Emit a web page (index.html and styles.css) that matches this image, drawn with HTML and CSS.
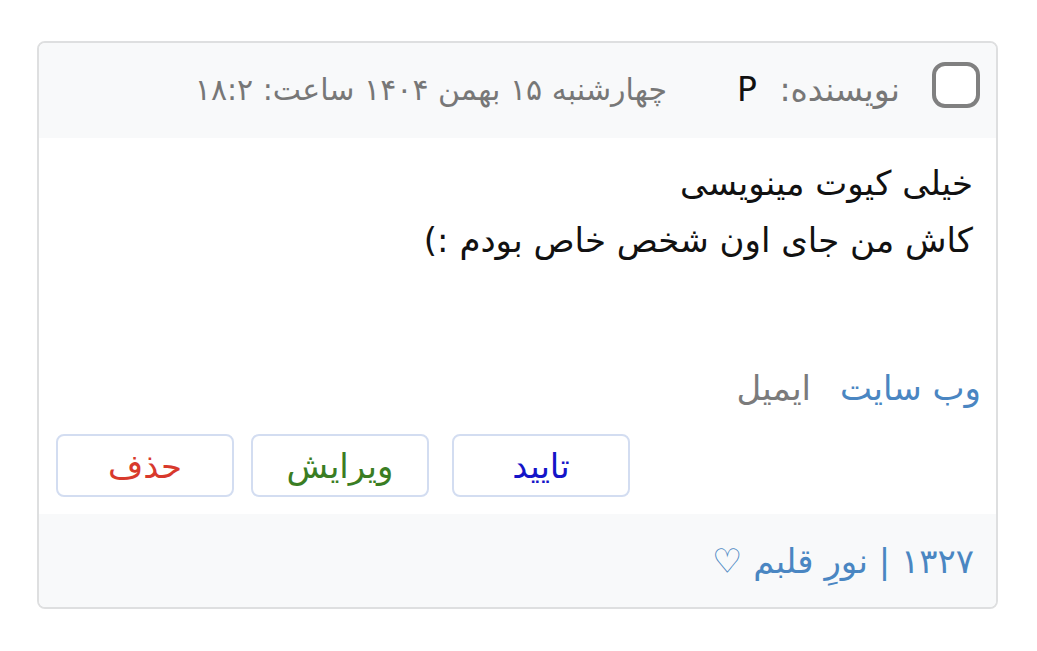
FILE: index.html
```html
<!DOCTYPE html>
<html lang="fa" dir="rtl">
<head>
<meta charset="utf-8">
<link rel="stylesheet" href="styles.css">
</head>
<body>
<div class="card">
  <div class="card-header">
    <span class="check"></span>
    <span class="author">نویسنده: <span class="name">P</span></span>
    <span class="date">چهارشنبه ۱۵ بهمن ۱۴۰۴ ساعت: ۱۸:۲</span>
  </div>
  <div class="card-body">
    <p class="text">خیلی کیوت مینویسی<br>کاش من جای اون شخص خاص بودم :)</p>
    <div class="links">
      <a class="site">وب سایت</a>
      <span class="email">ایمیل</span>
    </div>
    <div class="actions">
      <button class="btn approve">تایید</button>
      <button class="btn edit">ویرایش</button>
      <button class="btn del">حذف</button>
    </div>
  </div>
  <div class="card-footer">
    <a class="post">۱۳۲۷ | نورِ قلبم ♡</a>
  </div>
</div>
</body>
</html>
```

FILE: styles.css
```css
html, body {
  margin: 0;
  background: #ffffff;
}
body {
  padding: 41px 39px 0 37px;
  font-family: "DejaVu Sans", sans-serif;
  direction: rtl;
}
.card {
  width: 961px;
  height: 568px;
  box-sizing: border-box;
  border: 2px solid #dedfe0;
  border-radius: 8px;
  overflow: hidden;
  display: flex;
  flex-direction: column;
}
.card-header {
  height: 95px;
  background: #f8f9fa;
  display: flex;
  align-items: center;
  padding-right: 16px;
  padding-bottom: 3px;
  box-sizing: border-box;
  font-size: 33px;
}
.check {
  width: 48px;
  height: 46px;
  box-sizing: border-box;
  border: 4px solid #808080;
  border-radius: 13px;
  background: #fff;
  flex: none;
  margin-bottom: 8px;
}
.author {
  margin-right: 32px;
  color: #777;
}
.name {
  color: #111;
  margin-right: 12px;
}
.date {
  margin-right: 70px;
  color: #777;
  font-size: 30px;
}
.card-body {
  flex: 1;
  background: #fff;
  padding: 0 23px 0 17px;
  display: flex;
  flex-direction: column;
}
.text {
  margin: 17px 0 0;
  font-size: 34px;
  line-height: 57px;
  color: #111;
}
.links {
  margin-top: 99px;
  margin-right: -8px;
  font-size: 34px;
  line-height: 40px;
  display: flex;
  gap: 29px;
}
.site { color: #4a86c2; }
.email { color: #7b7b7b; }
.actions {
  margin-top: 26px;
  margin-right: 343px;
  display: flex;
  gap: 17px;
}
.btn {
  width: 178px;
  height: 63px;
  box-sizing: border-box;
  border: 2px solid #d3ddf1;
  border-radius: 8px;
  background: #fff;
  font-family: inherit;
  font-size: 34px;
  padding: 0;
}
.approve { color: #1414c8; }
.edit { color: #3a7d23; margin-right: 6px; }
.del { color: #d8392c; }
.card-footer {
  height: 93px;
  background: #f8f9fa;
  display: flex;
  align-items: center;
  padding-right: 22px;
  font-size: 34px;
}
.post { color: #4a86c2; }
```
